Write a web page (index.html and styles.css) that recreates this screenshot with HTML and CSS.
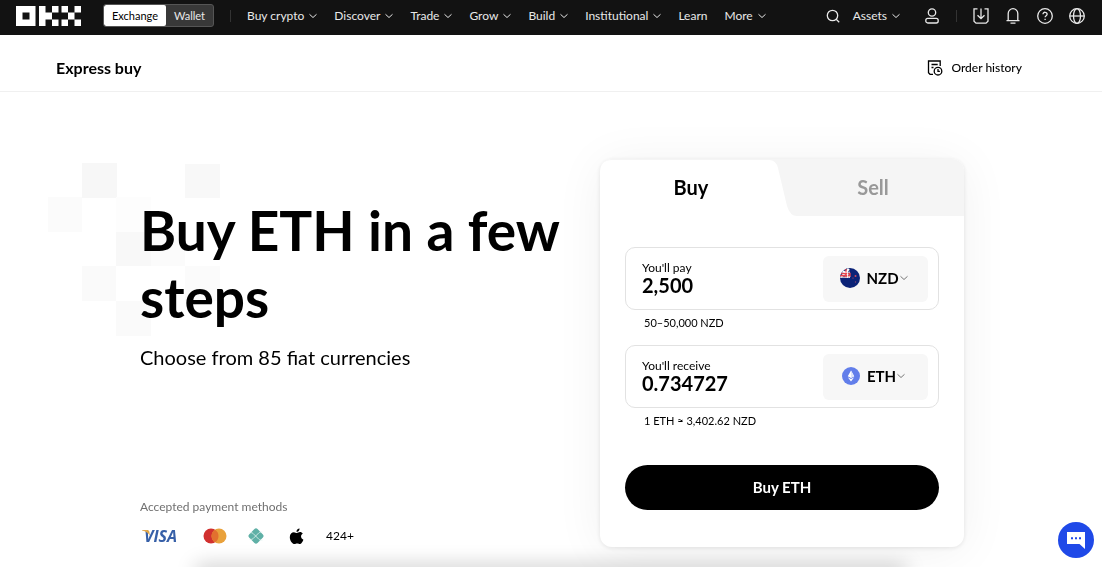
FILE: index.html
```html
<!DOCTYPE html>
<html lang="en">
<head>
<meta charset="utf-8">
<meta name="viewport" content="width=device-width, initial-scale=1">
<title>Express buy | OKX</title>
<link rel="stylesheet" href="styles.css">
</head>
<body>
<svg class="defs" aria-hidden="true">
  <symbol id="chevron" viewBox="0 0 8 8"><path d="M.5 2.300 4 5.500 7.500 2.300" fill="none" stroke="currentColor" stroke-width="1"/></symbol>
</svg>

<header class="topbar">
  <a class="logo" href="#" aria-label="OKX">
    <svg viewBox="0 0 65 20" fill="#fff">
      <path fill-rule="evenodd" d="M0 0h19.500v20H0zM6.500 6.500v7h7v-7z"/>
      <path d="M23 0h6.500v6.500H36V0h6.500v6.500H36v7h6.500V20H36v-6.500h-6.500V20H23z"/>
      <path d="M45.500 0H52v6.500h6.500V0H65v6.500h-6.500v7H65V20h-6.500v-6.500H52V20h-6.500v-6.500H52v-7h-6.500z"/>
    </svg>
  </a>
  <div class="switch">
    <button class="switch-item switch-on" type="button">Exchange</button>
    <button class="switch-item" type="button">Wallet</button>
  </div>
  <span class="divider divider-left"></span>
  <nav class="nav">
    <a href="#">Buy crypto <svg class="chev"><use href="#chevron"/></svg></a>
    <a href="#">Discover <svg class="chev"><use href="#chevron"/></svg></a>
    <a href="#">Trade <svg class="chev"><use href="#chevron"/></svg></a>
    <a href="#">Grow <svg class="chev"><use href="#chevron"/></svg></a>
    <a href="#">Build <svg class="chev"><use href="#chevron"/></svg></a>
    <a href="#">Institutional <svg class="chev"><use href="#chevron"/></svg></a>
    <a href="#">Learn</a>
    <a href="#">More <svg class="chev"><use href="#chevron"/></svg></a>
  </nav>
  <div class="tools">
    <button class="icon-btn search" type="button" aria-label="Search">
      <svg viewBox="0 0 16 16"><circle cx="7.500" cy="7.500" r="5.200"/><path d="m11.200 11.200 3 3"/></svg>
    </button>
    <a class="assets" href="#">Assets <svg class="chev"><use href="#chevron"/></svg></a>
    <button class="icon-btn" type="button" aria-label="Account">
      <svg viewBox="0 0 16 16"><circle cx="8" cy="4.500" r="3.700"/><rect x="1.800" y="10.400" width="12.400" height="4.600" rx="2"/></svg>
    </button>
    <span class="divider"></span>
    <div class="tool-group">
      <button class="icon-btn" type="button" aria-label="Download">
        <svg viewBox="0 0 16 16"><path d="M4.500.8H1v12.400l2 2h10l2-2V.8h-3.500M8 .5v10M4.500 7.200 8 10.700l3.500-3.500"/></svg>
      </button>
      <button class="icon-btn" type="button" aria-label="Notifications">
        <svg viewBox="0 0 16 16"><path d="M1.500 12.600h13M3.200 12.300V5.500a4.800 4.800 0 0 1 9.600 0v6.800M5.500 15.200h5"/></svg>
      </button>
      <button class="icon-btn" type="button" aria-label="Support">
        <svg viewBox="0 0 16 16"><circle cx="8" cy="8" r="7.300"/><path d="M6 6.300c0-2.800 4.100-2.600 4.100 0 0 1.400-2 1.400-2 3M8.100 10.700v1.300"/></svg>
      </button>
      <button class="icon-btn" type="button" aria-label="Language">
        <svg viewBox="0 0 16 16"><circle cx="8" cy="8" r="7.300"/><ellipse cx="8" cy="8" rx="3.500" ry="7.300"/><path d="M.8 8h14.400"/></svg>
      </button>
    </div>
  </div>
</header>

<div class="subbar">
  <strong class="subbar-title">Express buy</strong>
  <a class="history" href="#">
    <svg viewBox="0 0 16 16"><path d="M6 14.300H3L1.500 12.800V1h11.700v5M4.500 4.500h6.200M4.500 7.500h2"/><circle cx="11" cy="11.200" r="3.800"/><path d="M11 9v2.300h1.900"/></svg>
    Order history
  </a>
</div>

<main class="hero">
  <section class="intro">
    <svg class="pixels" viewBox="0 0 172 173" aria-hidden="true">
      <rect x="34" width="35" height="35" fill="#f7f7f7"/>
      <rect x="137" y="1" width="35" height="34" fill="#f8f8f8"/>
      <rect y="34" width="34" height="35" fill="#fbfbfb"/>
      <rect x="68" y="34" width="35" height="35" fill="#fdfdfd"/>
      <rect x="68" y="69" width="35" height="34" fill="#f8f8f8"/>
      <rect x="103" y="69" width="34" height="34" fill="#fbfbfb"/>
      <rect x="34" y="103" width="34" height="35" fill="#fafafa"/>
      <rect x="137" y="103" width="35" height="35" fill="#fbfbfb"/>
      <rect x="68" y="138" width="35" height="35" fill="#fafafa"/>
    </svg>
    <h1 class="headline">Buy ETH in a few steps</h1>
    <p class="lead">Choose from 85 fiat currencies</p>
    <p class="methods-title">Accepted payment methods</p>
    <div class="methods">
      <span class="visa"><svg class="visa-flick" viewBox="0 0 8 6"><path d="M0 0h5.500q1.500 0 1.800 1.500L8 6Q6 1.500 0 .5z" fill="#e0a64a"/></svg>VISA</span>
      <svg class="mastercard" viewBox="0 0 24 16"><circle cx="8" cy="8" r="7.500" fill="#d1302f"/><circle cx="16" cy="8" r="7.500" fill="#e9a13b"/><path d="M12 1.650a7.500 7.500 0 0 1 0 12.700 7.500 7.500 0 0 1 0-12.700z" fill="#e2702f"/></svg>
      <svg class="pix" viewBox="0 0 18 18"><rect x="3" y="3" width="12" height="12" rx="2.200" transform="rotate(45 9 9)" fill="#5fb0a6"/><path d="M2.500 6h1.800q1 0 1.700.7l6 6q.7.7 1.700.7h1.800M2.500 12.700h1.800q1 0 1.700-.7l6-6q.7-.7 1.700-.7h1.800" transform="translate(0 -.3)" fill="none" stroke="#e4f3f1" stroke-width=".8"/></svg>
      <svg class="apple" viewBox="0 0 15 17"><path d="M10.600.4c.1 1.900-1.500 3.500-3.200 3.400C7.200 2.100 8.900.5 10.600.4zM7.800 5c.9 0 1.800-.9 3.200-.9 1.100 0 2.200.6 2.800 1.500-2.600 1.500-2.200 5 .6 6.100-.7 1.900-2 4.300-3.500 4.300-1 0-1.400-.6-2.700-.6s-1.700.6-2.700.6C3.400 16 .8 12.600.8 9.200.8 5.900 2.900 4.200 4.900 4.200 6.200 4.200 7.100 5 7.800 5z"/></svg>
      <span class="more-methods">424+</span>
    </div>
  </section>

  <form class="card">
    <div class="tabs" role="tablist">
      <svg class="tab-shape" viewBox="0 0 198 57" aria-hidden="true"><path d="M0 14Q0 1 12 1h157q7 0 9 8l9 38q3 10 10 10H0z" fill="#fff"/></svg>
      <button class="tab tab-on" type="button" role="tab" aria-selected="true">Buy</button>
      <button class="tab" type="button" role="tab" aria-selected="false">Sell</button>
    </div>
    <div class="card-body">
      <div class="field">
        <div class="amount">
          <label for="pay">You'll pay</label>
          <input id="pay" type="text" value="2,500">
        </div>
        <div class="currency">
          <svg class="flag" viewBox="0 0 20 20"><circle cx="10" cy="10" r="10" fill="#0b2377"/><path d="M10 0A10 10 0 0 0 0 10h10z" fill="#26387c"/><path d="m3 3 7 6M9 1 1 9" stroke="#fff" stroke-width="1.800"/><path d="M.3 7.700h9.700V5.500H1.200M6 1v9" stroke="#e8434b" stroke-width="1.400" fill="none"/><path d="M0 9.300h10M7.500.4V10M2 4.200h8" stroke="#fff" stroke-width=".8"/><circle cx="15.500" cy="8" r="1" fill="#d5465b"/><circle cx="13" cy="10" r=".6" fill="#d5465b"/><circle cx="15.500" cy="14" r=".7" fill="#8c4371"/></svg>
          <select aria-label="Pay currency"><option>NZD</option></select>
          <svg class="chev"><use href="#chevron"/></svg>
        </div>
      </div>
      <p class="hint">50–50,000 NZD</p>
      <div class="field">
        <div class="amount">
          <label for="receive">You'll receive</label>
          <input id="receive" type="text" value="0.734727">
        </div>
        <div class="currency">
          <svg class="coin" viewBox="0 0 18 18"><circle cx="9" cy="9" r="9" fill="#627eea"/><path d="M9 3.500 5.800 9.200 9 11l3.200-1.800zM5.800 10.200 9 14.500l3.200-4.300L9 12z" fill="#fff"/><path d="M9 3.500v7.500l3.200-1.800z" fill="#dfe5fb"/></svg>
          <select aria-label="Receive currency"><option>ETH</option></select>
          <svg class="chev"><use href="#chevron"/></svg>
        </div>
      </div>
      <p class="hint">1 ETH ≈ 3,402.62 NZD</p>
      <button class="submit" type="submit">Buy ETH</button>
    </div>
  </form>
</main>

<div class="bottom-shade"></div>
<button class="chat" type="button" aria-label="Chat">
  <svg viewBox="0 0 18 17"><path d="M0 0h18v17l-5.500-5H0z" fill="#fff"/><path d="M4 5.200h2v2H4zm4 0h2v2H8zm4 0h2v2h-2z" fill="#1f49e8"/></svg>
</button>
</body>
</html>
```

FILE: styles.css
```css
* { box-sizing: border-box; }

body {
  margin: 0;
  min-height: 100vh;
  overflow: hidden;
  background: #fff;
  color: #000;
  font: 12px/16px Lato, "Noto Sans", sans-serif;
}

button, input, select {
  margin: 0;
  padding: 0;
  border: 0;
  background: none;
  color: inherit;
  font: inherit;
}

button { cursor: pointer; }
a { color: inherit; text-decoration: none; }
p, h1 { margin: 0; }
svg { display: block; flex: none; }
.defs { position: absolute; width: 0; height: 0; }
.chev { width: 8px; height: 8px; }

.topbar {
  display: flex;
  align-items: center;
  height: 35px;
  padding: 0 17px 4px 16px;
  background: #121212;
  color: #e8e8e8;
}

.logo svg { width: 65px; height: 20px; }

.switch {
  display: flex;
  height: 23px;
  margin-left: 22px;
  border: 1px solid #555;
  border-radius: 3px;
  background: #383838;
  overflow: hidden;
  font-size: 11px;
}

.switch-item { width: 47px; }
.switch-on { width: 62px; border-radius: 2px; background: #fff; color: #000; }

.divider { width: 1px; height: 12px; background: #333; }
.divider-left { margin-left: 16px; }

.nav { display: flex; gap: 17px; margin-left: 16px; }
.nav a, .assets { display: flex; align-items: center; gap: 5px; }

.tools { display: flex; align-items: center; margin-left: auto; }
.icon-btn svg {
  width: 16px;
  height: 16px;
  fill: none;
  stroke: #e8e8e8;
  stroke-width: 1.3;
}
.assets { margin: 0 24px 0 12px; }
.tools .divider { margin: 0 16px; }
.tool-group { display: flex; gap: 16px; }

.subbar {
  display: flex;
  align-items: center;
  justify-content: space-between;
  height: 57px;
  padding: 10px 80px 0 56px;
  border-bottom: 1px solid #f0f0f0;
}

.subbar-title { font-size: 16px; }
.history { display: flex; align-items: center; gap: 8px; font-weight: 500; }
.history svg { width: 16px; height: 16px; fill: none; stroke: #000; stroke-width: 1.3; }

.hero {
  display: flex;
  justify-content: space-between;
  padding: 67px 138px 20px 140px;
}

.intro {
  position: relative;
  display: flex;
  flex: 0 1 436px;
  flex-direction: column;
  padding-top: 38px;
}

.pixels {
  position: absolute;
  z-index: -1;
  top: 4px;
  left: -92px;
  width: 172px;
  height: 173px;
}

.headline { font-size: 55px; line-height: 67px; font-weight: 700; }
.lead { margin-top: 12px; font-size: 20px; line-height: 28px; }
.methods-title { margin-top: auto; color: #707070; }
.methods { display: flex; align-items: center; height: 18px; margin: 12px 0 2px; }
.visa {
  position: relative;
  width: 61px;
  padding-left: 4px;
  color: #3760a8;
  font: italic 700 16px/18px "Open Sans", sans-serif;
}
.visa-flick { position: absolute; top: 3px; left: 2px; width: 8px; height: 6px; }
.mastercard { width: 24px; height: 16px; margin: 0 20px 0 2px; }
.pix { width: 18px; height: 18px; margin-right: 24px; }
.apple { width: 15px; height: 17px; }
.more-methods { margin-left: 22px; }

.card {
  width: 364px;
  border-radius: 12px;
  background: #fff;
  box-shadow: 0 1px 5px rgba(0, 0, 0, .1), 0 4px 50px rgba(0, 0, 0, .06);
}

.tabs {
  position: relative;
  display: grid;
  grid-template-columns: 1fr 1fr;
  height: 57px;
  border-radius: 12px 12px 0 0;
  background: #f5f5f5;
  overflow: hidden;
}

.tab-shape { position: absolute; top: 0; left: 0; width: 198px; height: 57px; }
.tab { position: relative; padding-bottom: 2px; color: #999; font-size: 20px; font-weight: 700; }
.tab-on { color: #000; }

.card-body { padding: 31px 25px 37px; }

.field {
  display: flex;
  align-items: center;
  justify-content: space-between;
  height: 63px;
  padding: 0 10px 0 16px;
  border: 1px solid #e2e2e2;
  border-radius: 10px;
}

.amount { display: flex; flex: 1; flex-direction: column; min-width: 0; }
.amount label { line-height: 14px; }
.amount input { width: 100%; height: 22px; padding-bottom: 1px; font-size: 20px; font-weight: 700; }

.currency {
  display: flex;
  align-items: center;
  justify-content: center;
  width: 105px;
  height: 46px;
  padding: 0 4px 2px 0;
  border-radius: 6px;
  background: #f7f7f7;
}

.currency select { appearance: none; margin-left: 7px; font-size: 15px; font-weight: 700; }
.currency .chev { color: #777; }
.flag { width: 20px; height: 20px; }
.coin { width: 18px; height: 18px; }

.hint { height: 35px; padding: 5px 19px; font-size: 11px; }

.submit {
  width: 100%;
  height: 45px;
  margin-top: 22px;
  padding-bottom: 2px;
  border-radius: 23px;
  background: #000;
  color: #fff;
  font-size: 15px;
  font-weight: 700;
}

.bottom-shade {
  position: fixed;
  z-index: -1;
  right: 18%;
  bottom: -10px;
  left: 18%;
  height: 10px;
  box-shadow: 0 0 20px 2px rgba(0, 0, 0, .22);
}

.chat {
  position: fixed;
  right: 8px;
  bottom: 9px;
  display: grid;
  place-items: center;
  width: 36px;
  height: 36px;
  border-radius: 50%;
  background: #1f49e8;
}

.chat svg { width: 18px; height: 17px; }
```
